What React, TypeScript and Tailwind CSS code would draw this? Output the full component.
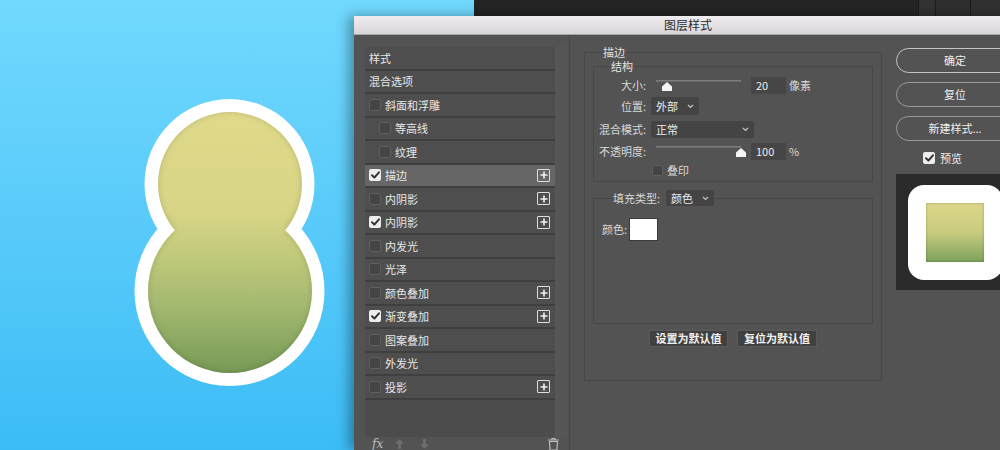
import React from "react";

const F = "font-['Noto_Sans_CJK_SC','Noto_Sans',sans-serif]";

function Check({ checked, small = false }: { checked: boolean; small?: boolean }) {
  const size = small ? "w-[11px] h-[11px]" : "w-[12px] h-[12px]";
  return checked ? (
    <span className={`flex shrink-0 items-center justify-center ${size} rounded-[2px] bg-[#ededed]`}>
      <svg width="9" height="8" viewBox="0 0 9 8">
        <path d="M1 4.2 L3.4 6.5 L8 1.3" fill="none" stroke="#333" strokeWidth="1.9" strokeLinecap="round" strokeLinejoin="round" />
      </svg>
    </span>
  ) : (
    <span className={`block shrink-0 ${size} rounded-[2px] border border-[#5f5f5f] bg-[#454545]`} />
  );
}

function PlusBox() {
  return (
    <span className="flex items-center justify-center w-[13px] h-[13px] border-[1.5px] border-[#dedede] rounded-[1px] ml-auto mr-[5px]">
      <svg width="8" height="8" viewBox="0 0 8 8">
        <path d="M4 0.5V7.5M0.5 4H7.5" stroke="#f2f2f2" strokeWidth="1.6" />
      </svg>
    </span>
  );
}

function Chevron() {
  return (
    <svg width="7" height="5" viewBox="0 0 7 5">
      <path d="M1 1L3.5 3.5L6 1" fill="none" stroke="#c4c4c4" strokeWidth="1.2" />
    </svg>
  );
}

function Slider({ pos }: { pos: number }) {
  return (
    <div className="relative w-[85px] h-full ml-[5px]">
      <div className="mt-[3px] h-[2px] bg-[#6a6a6a] border-t border-[#7c7c7c]" />
      <svg className="absolute top-[5px]" style={{ left: pos }} width="10" height="9" viewBox="0 0 10 9">
        <path d="M5 0L10 4.5V9H0V4.5Z" fill="#f5f5f5" />
      </svg>
    </div>
  );
}

type Row = { label: string; header?: boolean; cb?: boolean; indent?: boolean; plus?: boolean; active?: boolean };

const rows: Row[] = [
  { label: "样式", header: true },
  { label: "混合选项", header: true },
  { label: "斜面和浮雕", cb: false },
  { label: "等高线", cb: false, indent: true },
  { label: "纹理", cb: false, indent: true },
  { label: "描边", cb: true, plus: true, active: true },
  { label: "内阴影", cb: false, plus: true },
  { label: "内阴影", cb: true, plus: true },
  { label: "内发光", cb: false },
  { label: "光泽", cb: false },
  { label: "颜色叠加", cb: false, plus: true },
  { label: "渐变叠加", cb: true, plus: true },
  { label: "图案叠加", cb: false },
  { label: "外发光", cb: false },
  { label: "投影", cb: false, plus: true },
];

function Canvas() {
  return (
    <svg width="354" height="434" viewBox="0 0 354 434" className="shrink-0 block">
      <defs>
        <linearGradient id="g8" gradientUnits="userSpaceOnUse" x1="0" y1="96" x2="0" y2="357">
          <stop offset="0" stopColor="#e0da8a" />
          <stop offset="0.38" stopColor="#d8d586" />
          <stop offset="0.55" stopColor="#c2ca7b" />
          <stop offset="0.75" stopColor="#a2b86f" />
          <stop offset="1" stopColor="#779a56" />
        </linearGradient>
        <filter id="inner" x="-20%" y="-20%" width="140%" height="140%">
          <feFlood floodColor="#000" floodOpacity="0.35" result="flood" />
          <feComposite in="flood" in2="SourceAlpha" operator="out" result="outside" />
          <feGaussianBlur in="outside" stdDeviation="3" result="blur" />
          <feComposite in="blur" in2="SourceAlpha" operator="in" result="shadow" />
          <feMerge>
            <feMergeNode in="SourceGraphic" />
            <feMergeNode in="shadow" />
          </feMerge>
        </filter>
      </defs>
      <g fill="#ffffff">
        <circle cx="229.5" cy="168" r="85" />
        <circle cx="229.5" cy="275" r="95" />
      </g>
      <g fill="url(#g8)" filter="url(#inner)">
        <circle cx="230" cy="168" r="72" />
        <circle cx="230" cy="275" r="82" />
      </g>
    </svg>
  );
}

export default function App() {
  return (
    <div className={`w-[1000px] h-[450px] overflow-hidden flex flex-col bg-gradient-to-b from-[#71d9fd] to-[#3bbcf6] ${F}`}>
      {/* top strip */}
      <div className="flex h-[16px] shrink-0">
        <div className="w-[474px] shrink-0" />
        <div className="flex flex-1 bg-[#242424]">
          <div className="flex-1" />
          <div className="w-[17px] bg-[#323232] border-l border-[#1b1b1b]" />
          <div className="w-[35px] bg-[#2e2e2e] border-l border-[#1b1b1b]" />
          <div className="w-[30px] bg-[#313131] border-l border-[#1b1b1b]" />
        </div>
      </div>

      <div className="flex h-[434px]">
        <Canvas />

        {/* dialog window */}
        <div className="w-[668px] h-[434px] shrink-0 flex flex-col bg-[#535353] shadow-[-5px_0_12px_rgba(0,0,0,0.35)]">
          <div className="h-[19px] shrink-0 flex items-center justify-center bg-gradient-to-b from-[#efedef] to-[#d8d6d8] border-b border-[#a6a6a6] text-[12px] text-[#2b2b2b]">
            图层样式
          </div>

          <div className="flex flex-1 min-h-0">
            {/* left column */}
            <div className="w-[216px] shrink-0 border-r border-[#474747] pl-[11px] pt-[12px] flex flex-col">
              <div className="flex w-[203px] h-[390px] shrink-0 bg-[#4c4c4c]">
                <div className="w-[190px] flex flex-col">
                  {rows.map((r, i) => (
                    <div
                      key={i}
                      className={`flex items-center h-[23.5px] shrink-0 border-b-[2px] border-[#3f3f3f] text-[11px] text-[#e8e8e8] ${
                        r.active ? "bg-[#666666]" : "bg-[#4e4e4e]"
                      } ${r.indent ? "pl-[14px]" : "pl-[4px]"}`}
                    >
                      {!r.header && <Check checked={!!r.cb} />}
                      <span className={r.header ? "" : "ml-[4px]"}>{r.label}</span>
                      {r.plus && <PlusBox />}
                    </div>
                  ))}
                </div>
                <div className="w-[13px] bg-[#565656]" />
              </div>
              <div className="flex items-center h-[20px] pl-[7px] pr-[9px] w-[203px]">
                <span className="font-['DejaVu_Serif',serif] italic text-[12px] text-[#bdbdbd] leading-none">fx</span>
                <svg className="ml-[12px]" width="9" height="10" viewBox="0 0 9 10">
                  <path d="M4.5 0L9 5H6V10H3V5H0Z" fill="#6c6c6c" />
                </svg>
                <svg className="ml-[16px]" width="9" height="10" viewBox="0 0 9 10">
                  <path d="M4.5 10L9 5H6V0H3V5H0Z" fill="#6c6c6c" />
                </svg>
                <svg className="ml-auto" width="11" height="12" viewBox="0 0 11 12">
                  <path d="M0 2H11M4 2V0.5H7V2M1.5 3.5H9.5L9 12H2Z" fill="none" stroke="#bdbdbd" strokeWidth="1.2" />
                </svg>
              </div>
            </div>

            {/* middle column */}
            <div className="w-[315px] shrink-0 pl-[14px] pt-[10px]">
              <fieldset className="w-[298px] h-[336px] border border-[#474747] px-[8px] text-[11px] text-[#d8d8d8]">
                <legend className="ml-[9px] px-[1px] leading-[14px] text-[#e2e2e2]">描边</legend>

                <fieldset className="w-[280px] border border-[#474747] pb-[4px]">
                  <legend className="ml-[16px] px-[1px] leading-[14px] text-[#e2e2e2]">结构</legend>
                  <div className="pt-[4px] flex flex-col">
                    <div className="flex items-center h-[17px]">
                      <span className="w-[52px] text-right">大小:</span>
                      <div className="ml-[5px] h-full flex items-center">
                        <Slider pos={6} />
                        <div className="ml-[10px] w-[35px] h-[17px] bg-[#464646] pl-[5px] flex items-center text-[#ececec]">20</div>
                        <span className="ml-[3px]">像素</span>
                      </div>
                    </div>
                    <div className="flex items-center h-[18px] mt-[3px]">
                      <span className="w-[52px] text-right">位置:</span>
                      <div className="ml-[5px] flex items-center justify-between w-[48px] h-[18px] px-[5px] bg-[#444444] rounded-[2px] text-[#ececec]">
                        外部
                        <Chevron />
                      </div>
                    </div>
                    <div className="flex items-center h-[17px] mt-[6px]">
                      <span className="w-[52px] text-right">混合模式:</span>
                      <div className="ml-[5px] flex items-center justify-between w-[103px] h-[17px] px-[5px] bg-[#444444] rounded-[2px] text-[#ececec]">
                        正常
                        <Chevron />
                      </div>
                    </div>
                    <div className="flex items-center h-[17px] mt-[5px]">
                      <span className="w-[52px] text-right">不透明度:</span>
                      <div className="ml-[5px] h-full flex items-center">
                        <Slider pos={80} />
                        <div className="ml-[10px] w-[35px] h-[17px] bg-[#464646] pl-[5px] flex items-center text-[#ececec]">100</div>
                        <span className="ml-[3px]">%</span>
                      </div>
                    </div>
                    <div className="flex items-center h-[14px] mt-[3px] pl-[58px]">
                      <Check checked={false} small />
                      <span className="ml-[4px]">叠印</span>
                    </div>
                  </div>
                </fieldset>

                <fieldset className="w-[280px] h-[134px] mt-[8px] border border-[#474747]">
                  <legend className="ml-[19px] flex items-center">
                    <span>填充类型:</span>
                    <div className="ml-[6px] flex items-center justify-between w-[48px] h-[16px] px-[5px] bg-[#444444] rounded-[2px] text-[#ececec]">
                      颜色
                      <Chevron />
                    </div>
                  </legend>
                  <div className="flex items-center pt-[11px] pl-[8px]">
                    <span>颜色:</span>
                    <div className="ml-[2px] w-[29px] h-[23px] bg-white border border-[#3a3a3a]" />
                  </div>
                </fieldset>

                <div className="flex justify-center gap-[9px] mt-[6px]">
                  <div className="w-[79px] h-[17px] flex items-center justify-center bg-[#404040] border border-[#5a5a5a] font-bold text-[#f2f2f2]">设置为默认值</div>
                  <div className="w-[80px] h-[17px] flex items-center justify-center bg-[#404040] border border-[#5a5a5a] font-bold text-[#f2f2f2]">复位为默认值</div>
                </div>
              </fieldset>
            </div>

            {/* right column */}
            <div className="w-[137px] shrink-0 pl-[11px] pt-[13px] flex flex-col text-[11px] text-[#f0f0f0]">
              <div className="flex flex-col gap-[9px]">
                <div className="w-[118px] h-[25px] rounded-full border border-[#c4c4c4] flex items-center justify-center">确定</div>
                <div className="w-[118px] h-[25px] rounded-full border border-[#9a9a9a] flex items-center justify-center">复位</div>
                <div className="w-[118px] h-[25px] rounded-full border border-[#9a9a9a] flex items-center justify-center">新建样式...</div>
              </div>
              <div className="flex items-center mt-[11px] pl-[27px] h-[12px]">
                <Check checked />
                <span className="ml-[5px]">预览</span>
              </div>
              <div className="mt-[10px] w-[118px] h-[116px] bg-[#2b2b2b] flex justify-center pt-[11px]">
                <div className="w-[95px] h-[95px] rounded-[16px] bg-white flex items-center justify-center">
                  <div className="w-[58px] h-[59px] bg-gradient-to-b from-[#ddd78a] via-[#c8cb7d] to-[#7ba25c] shadow-[inset_0_0_3px_rgba(0,0,0,0.25)]" />
                </div>
              </div>
            </div>
          </div>
        </div>
      </div>
    </div>
  );
}
